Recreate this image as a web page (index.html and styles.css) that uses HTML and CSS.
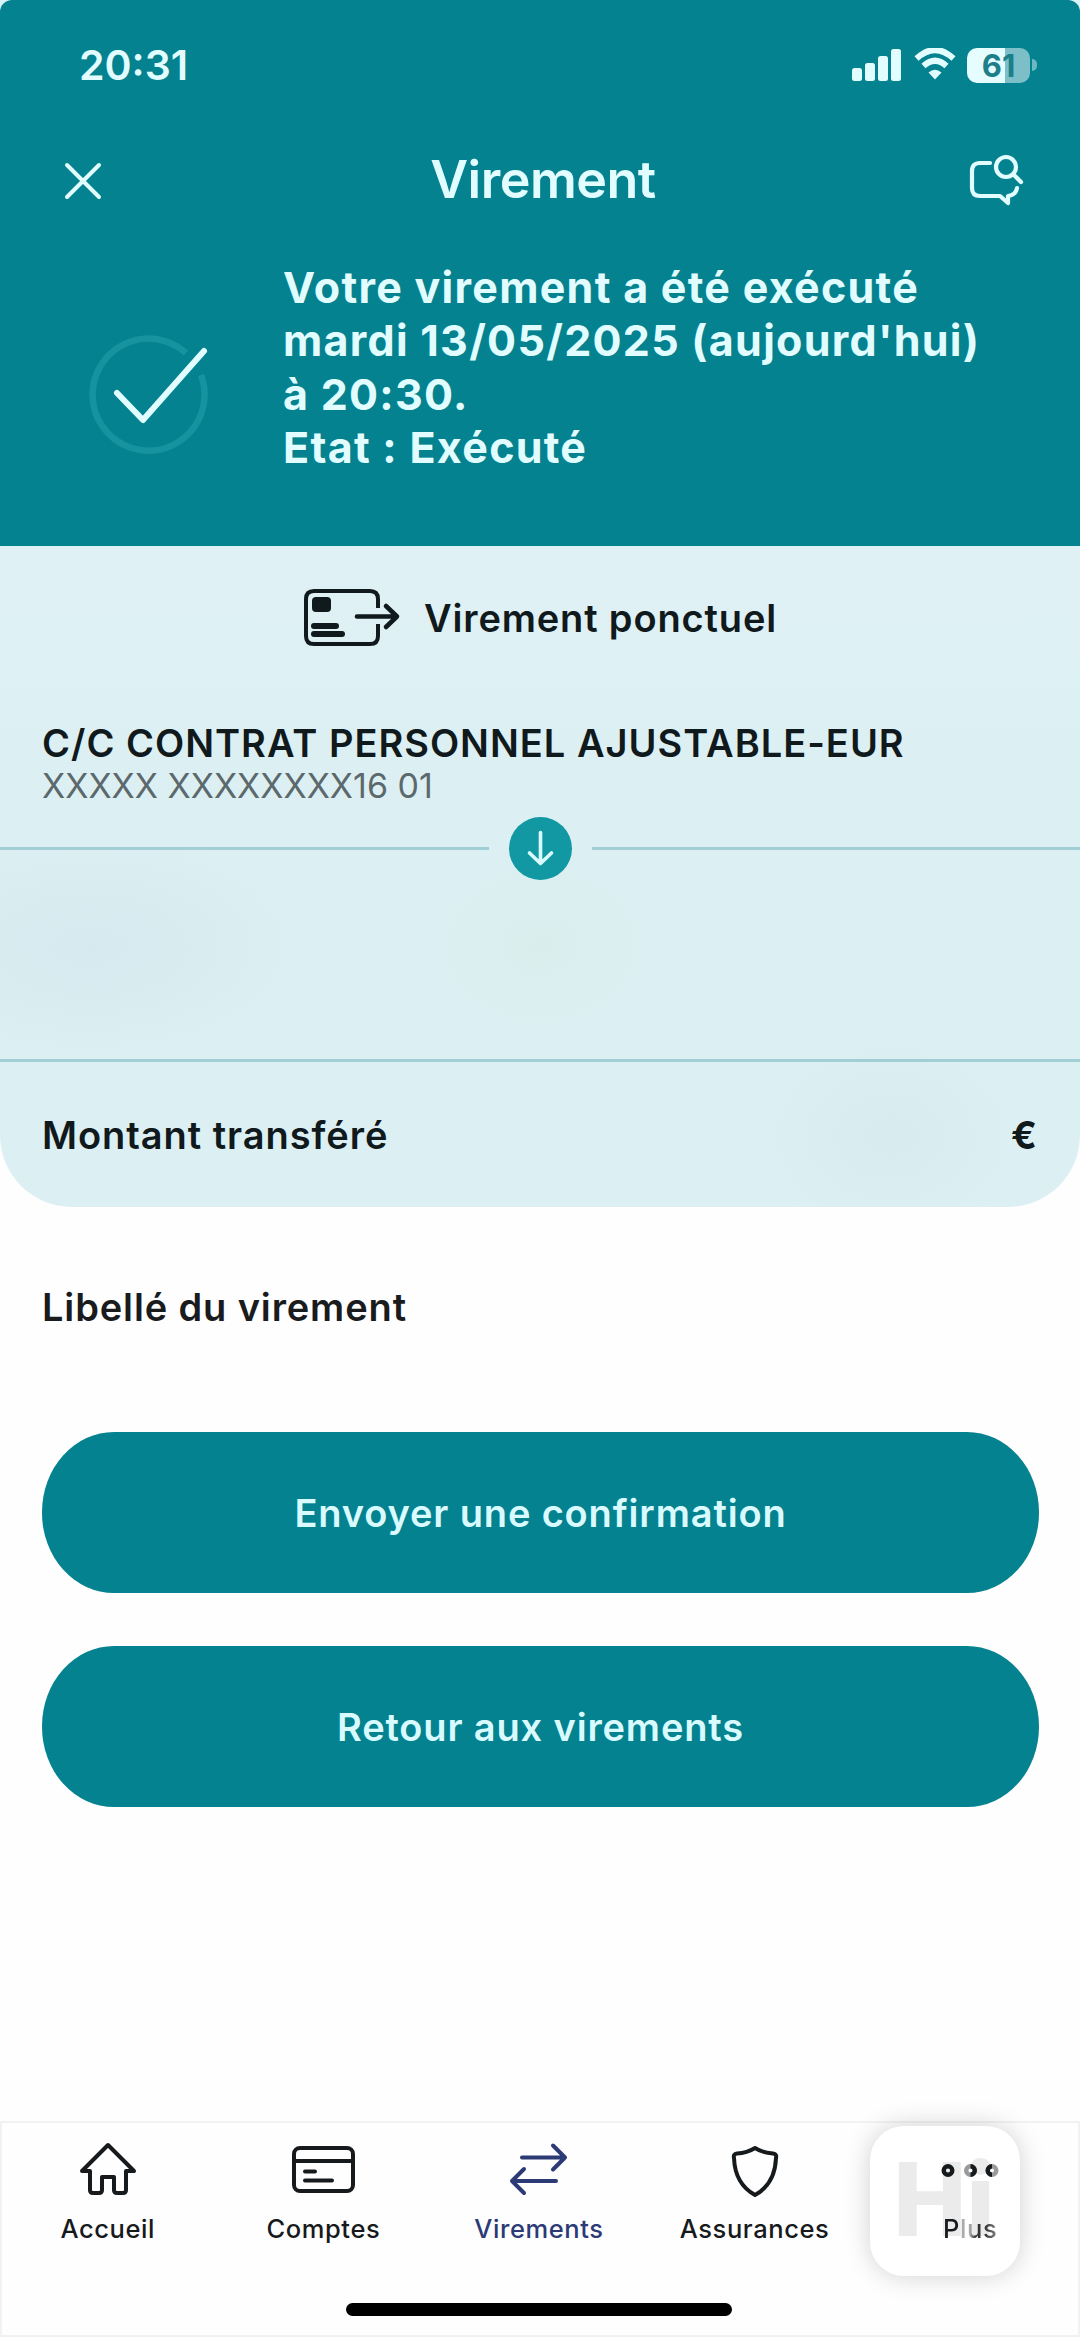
FILE: index.html
```html
<!DOCTYPE html>
<html lang="fr">
<head>
<meta charset="utf-8">
<title>Virement</title>
<link rel="stylesheet" href="styles.css">
</head>
<body>
<div class="screen">
  <header class="header">
    <div class="status">
      <span class="time">20:31</span>
      <div class="indicators">
        <svg width="50" height="32" viewBox="0 0 50 32" fill="currentColor"><rect x="0" y="19" width="10" height="13" rx="2.5"/><rect x="13" y="14" width="10" height="18" rx="2.5"/><rect x="26" y="7" width="10" height="25" rx="2.5"/><rect x="39" y="0" width="10" height="32" rx="2.5"/></svg>
        <svg class="wifi" width="42" height="32" viewBox="0 0 42 32" fill="none" stroke="currentColor"><path d="M2.5 10.5Q21-6.500 39.500 10.500" stroke-width="6"/><path d="M9.500 18Q21 7.500 32.500 18" stroke-width="6"/><path d="M14.500 24.500Q21 19 27.500 24.500L21 31.500Z" fill="currentColor" stroke="none"/></svg>
        <div class="battery"><span>61</span></div><i class="nub"></i>
      </div>
    </div>
    <div class="titlebar">
      <svg class="close" width="44" height="44" viewBox="0 0 44 44" fill="none" stroke="currentColor" stroke-width="4" stroke-linecap="round"><path d="M6 6L38 38M38 6L6 38"/></svg>
      <h1>Virement</h1>
      <svg class="search" width="56" height="56" viewBox="0 0 56 56" fill="none" stroke="currentColor" stroke-width="4.200" stroke-linecap="round" stroke-linejoin="round"><path d="M21 11H11Q3 11 3 19V36Q3 44 11 44H31L39 51V44Q47 43 48 36"/><circle cx="37" cy="15" r="10"/><path d="M44.500 22.500L52 30"/></svg>
    </div>
    <div class="message">
      <svg class="done" width="124" height="124" viewBox="0 0 124 124" fill="none" stroke-linecap="round" stroke-linejoin="round"><path d="M100 22A56 56 0 1 0 115 44" stroke="#16939f" stroke-width="6.500" stroke-linecap="butt"/><path d="M31 62L57 89L118 20" stroke="currentColor" stroke-width="6"/></svg>
      <p>Votre virement a été exécuté<br>mardi 13/05/2025 (aujourd'hui)<br>à 20:30.<br>Etat : Exécuté</p>
    </div>
  </header>

  <section class="card">
    <div class="kind">
      <svg width="98" height="60" viewBox="0 0 98 60" fill="none" stroke="currentColor" stroke-width="4" stroke-linecap="round" stroke-linejoin="round"><path d="M75 20V11Q75 3 67 3H11Q3 3 3 11V48Q3 56 11 56H67Q75 56 75 48V36" stroke-linecap="butt"/><rect x="9" y="9" width="19" height="15" rx="4" fill="currentColor" stroke="none"/><path d="M11 38H33M11 46H39" stroke-width="6"/><path d="M54 28.500H93M83 18L94 28.500L83 39" stroke-width="4.600"/></svg>
      <span>Virement ponctuel</span>
    </div>
    <div class="account">
      <strong>C/C CONTRAT PERSONNEL AJUSTABLE-EUR</strong>
      <small>XXXXX XXXXXXXX16 01</small>
    </div>
    <div class="split">
      <i></i>
      <svg width="63" height="63" viewBox="0 0 63 63" fill="none" stroke="#d8fbff" stroke-width="3.600" stroke-linecap="round" stroke-linejoin="round"><circle cx="31.500" cy="31.500" r="31.500" fill="#1298a2" stroke="none"/><path d="M31.500 15.500V46M20.500 36L31.500 46.500L42.500 36"/></svg>
      <i></i>
    </div>
    <div class="recipient"></div>
    <div class="amount"><span>Montant transféré</span><b>€</b></div>
  </section>

  <div class="label">Libellé du virement</div>
  <div class="actions">
    <button>Envoyer une confirmation</button>
    <button>Retour aux virements</button>
  </div>

  <nav class="tabs">
    <div class="tab"><svg width="64" height="60" viewBox="0 0 64 60" fill="none" stroke="currentColor" stroke-width="4" stroke-linejoin="round"><path d="M32 6L58 32H50V51Q50 54 47 54H41Q38 54 38 51V38H26V51Q26 54 23 54H17Q14 54 14 51V32H6Z"/></svg><span>Accueil</span></div>
    <div class="tab"><svg width="64" height="60" viewBox="0 0 64 60" fill="none" stroke="currentColor" stroke-width="4" stroke-linecap="round"><rect x="3" y="9" width="59" height="43" rx="6"/><path d="M3 22H62M14 32.500H24M14 41.500H41"/></svg><span>Comptes</span></div>
    <div class="tab active"><svg width="64" height="60" viewBox="0 0 64 60" fill="none" stroke="currentColor" stroke-width="4" stroke-linecap="round" stroke-linejoin="round"><path d="M15 18.500H58M46 6.500L58 18.500L46 30.500M49 42H5M17 30L5 42L17 54"/></svg><span>Virements</span></div>
    <div class="tab"><svg width="64" height="60" viewBox="0 0 64 60" fill="none" stroke="currentColor" stroke-width="4" stroke-linejoin="round"><path d="M32 9Q40 14 50 14.500Q54 15 53 19Q52 45 32 56Q12 45 11 19Q10 15 14 14.500Q24 14 32 9Z"/></svg><span>Assurances</span></div>
    <div class="tab more"><div class="badge">Hi</div><svg width="64" height="60" viewBox="0 0 64 60" fill="none" stroke-width="4.400"><circle cx="10" cy="31.500" r="4.300" stroke="#171a1c"/><circle cx="32.500" cy="31.500" r="4.300" stroke="#9a9a9a"/><path d="M32.500 27.200A4.300 4.300 0 0 1 32.500 35.800" stroke="#171a1c"/><circle cx="54" cy="31.500" r="4.300" stroke="#9a9a9a"/><path d="M54 27.200A4.300 4.300 0 0 0 54 35.800" stroke="#171a1c"/></svg><span class="plus">Plus</span></div>
    <div class="home"></div>
  </nav>
</div>
</body>
</html>
```
FILE: styles.css
```css
* { box-sizing: border-box; }
body {
  margin: 0;
  background: #d9f4f7;
  color: #10191c;
  font-family: Inter, "Liberation Sans", sans-serif;
}
svg { display: block; flex: none; }
.screen {
  display: flex;
  flex-direction: column;
  width: 1080px;
  height: 2337px;
  background: #fefefe;
  border-radius: 12px 12px 0 0;
  overflow: hidden;
}

.header {
  height: 546px;
  background: #04828f;
  color: #e2fdff;
}
.status {
  display: flex;
  align-items: center;
  justify-content: space-between;
  height: 130px;
  padding: 0 43px 0 79px;
}
.time { font-size: 41px; font-weight: 600; }
.indicators { display: flex; align-items: center; }
.wifi { margin: -2px 11px 0 12px; }
.battery {
  display: flex;
  align-items: center;
  justify-content: center;
  width: 63px;
  height: 35px;
  border-radius: 10px;
  background: linear-gradient(90deg, #e6fdff 61%, #7cbfc9 61%);
  color: #1c7f89;
  font-size: 31px;
  font-weight: 700;
  line-height: 35px;
}
.nub {
  width: 5px;
  height: 12px;
  margin-left: 2px;
  border-radius: 0 6px 6px 0;
  background: #6cb9c4;
}
.titlebar {
  display: grid;
  grid-template-columns: 56px 1fr 56px;
  align-items: center;
  height: 98px;
  padding: 0 55px 0 61px;
}
.titlebar h1 {
  margin: 1px 0 0;
  justify-self: center;
  font-size: 52px;
  font-weight: 600;
  line-height: 60px;
  letter-spacing: -0.500px;
}
.search { margin-top: 2px; }
.close { margin-top: 4px; }
.message {
  display: flex;
  padding: 33px 0 0 86px;
}
.done { margin-top: 70px; }
.message p {
  margin: 0 0 0 73px;
  font-size: 43px;
  font-weight: 700;
  line-height: 53.300px;
  letter-spacing: 1.280px;
  white-space: nowrap;
}

.card {
  height: 661px;
  border-radius: 0 0 72px 72px;
  background:
    radial-gradient(ellipse 130px 100px at 890px 590px, #d8ebee 0, #d8ebee00 100%),
    radial-gradient(ellipse 130px 100px at 540px 400px, #d9eeec 0, #d9eeec00 100%),
    radial-gradient(ellipse 210px 110px at 90px 400px, #d6e9ee 0, #d6e9ee00 100%),
    linear-gradient(#e0f1f5, #dcf0f4 30%);
}
.kind {
  display: flex;
  align-items: center;
  justify-content: center;
  gap: 23px;
  height: 144px;
  margin-bottom: -2px;
  font-size: 38px;
  font-weight: 600;
  letter-spacing: 0.850px;
}
.account {
  display: flex;
  flex-direction: column;
  padding: 33px 42px 0;
}
.account strong { font-size: 38px; font-weight: 600; line-height: 44px; letter-spacing: 1px; }
.account small { color: #5c696c; font-size: 34px; line-height: 42px; }
.split {
  display: flex;
  align-items: center;
  gap: 20px;
  margin-top: 10px;
}
.split i { flex: 1; height: 3px; background: #a0d0d6; }
.recipient { height: 179px; }
.amount {
  display: flex;
  align-items: center;
  justify-content: space-between;
  height: 148px;
  padding: 0 42px;
  border-top: 3px solid #a0d0d6;
  font-size: 38px;
  font-weight: 600;
  letter-spacing: 0.950px;
}
.amount b { font-weight: 700; }

.label {
  height: 201px;
  padding: 0 42px;
  color: #191b1d;
  font-size: 38px;
  font-weight: 600;
  line-height: 201px;
  letter-spacing: 0.870px;
}
.actions {
  display: grid;
  gap: 53px;
  padding: 24px 41px 0 42px;
}
.actions button {
  height: 161px;
  border: 0;
  border-radius: 72px / 80px;
  background: #04828f;
  color: #d9fbff;
  font: 600 38px/1 Inter, "Liberation Sans", sans-serif;
  letter-spacing: 0.850px;
}

.tabs {
  display: grid;
  grid-template-columns: repeat(5, 215.600px);
  grid-template-rows: 1fr 34px;
  justify-items: center;
  height: 216px;
  margin-top: auto;
  box-shadow: inset 0 0 0 2px #f2f2f2;
}
.tab {
  position: relative;
  display: flex;
  flex-direction: column;
  align-items: center;
  padding-top: 18px;
  color: #171a1c;
  font-size: 25.500px;
  font-weight: 500;
  letter-spacing: 0.600px;
}
.tab span { margin-top: 10px; line-height: 40px; }
.tab.active { color: #2c3a75; }
.tab svg, .plus { position: relative; }
.badge {
  position: absolute;
  top: 5px;
  left: 50%;
  width: 150px;
  height: 150px;
  margin-left: -100px;
  padding-left: 23px;
  border-radius: 34px;
  background: #fff;
  box-shadow: 0 0 26px #0000002e;
  color: #ebebeb;
  font: 900 104px/150px Roboto, sans-serif;
  letter-spacing: 0;
}
.tab .plus {
  background: linear-gradient(90deg, #171a1c 28%, #aaa 28% 50%, #333 60% 78%, #888 100%);
  background-clip: text;
  color: transparent;
}
.home {
  grid-column: 1 / -1;
  width: 386px;
  height: 13px;
  border-radius: 7px;
  background: #000;
}
```
